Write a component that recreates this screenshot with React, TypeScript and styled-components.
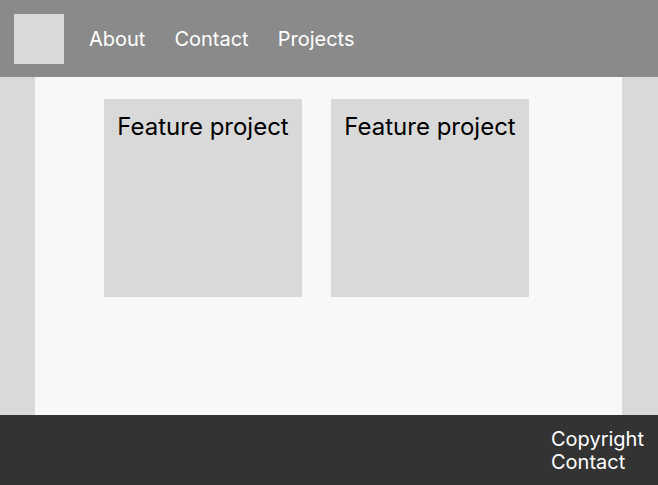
import React from "react";
import styled, { createGlobalStyle } from "styled-components";

const GlobalStyle = createGlobalStyle`
  *, *::before, *::after { box-sizing: border-box; }
  body { margin: 0; font-family: Inter, "Liberation Sans", sans-serif; }
`;

const Page = styled.div`
  display: flex;
  flex-direction: column;
  min-height: 100vh;
  background: #d9d9d9;
`;

const Header = styled.header`
  display: flex;
  align-items: center;
  gap: 25px;
  padding: 14px 14px 13px;
  background: #8a8a8a;
`;

const Logo = styled.a`
  width: 50px;
  height: 50px;
  flex: none;
  background: #d9d9d9;
`;

const Nav = styled.nav`
  display: flex;
  flex-wrap: wrap;
  gap: 29px;
  padding-top: 1px;
`;

const TextLink = styled.a`
  color: #ffffff;
  font-size: 20px;
  line-height: 23px;
  text-decoration: none;
`;

const Main = styled.main`
  flex: 1;
  display: flex;
  flex-wrap: wrap;
  align-items: flex-start;
  align-content: flex-start;
  justify-content: center;
  gap: 29px;
  margin: 0 36px 0 35px;
  padding: 22px 24px 22px 0;
  background: #f8f8f8;
`;

const Card = styled.article`
  width: 198px;
  aspect-ratio: 1;
  padding: 13px 0;
  background: #d9d9d9;
`;

const CardTitle = styled.h2`
  margin: 0;
  font-size: 24px;
  font-weight: 400;
  line-height: 29px;
  text-align: center;
  color: #000000;
`;

const Footer = styled.footer`
  display: flex;
  justify-content: flex-end;
  padding: 13px 14px 11px;
  background: #333333;
`;

const FooterLinks = styled.div`
  display: flex;
  flex-direction: column;
`;

const sections = ["About", "Contact", "Projects"];
const projects = [
  { id: 1, title: "Feature project" },
  { id: 2, title: "Feature project" },
];

export default function App() {
  return (
    <>
      <GlobalStyle />
      <Page>
        <Header>
          <Logo href="#home" aria-label="Home" />
          <Nav>
            {sections.map((name) => (
              <TextLink key={name} href={`#${name.toLowerCase()}`}>{name}</TextLink>
            ))}
          </Nav>
        </Header>
        <Main>
          {projects.map((project) => (
            <Card key={project.id}>
              <CardTitle>{project.title}</CardTitle>
            </Card>
          ))}
        </Main>
        <Footer>
          <FooterLinks>
            <TextLink as="span">Copyright</TextLink>
            <TextLink href="#contact">Contact</TextLink>
          </FooterLinks>
        </Footer>
      </Page>
    </>
  );
}
